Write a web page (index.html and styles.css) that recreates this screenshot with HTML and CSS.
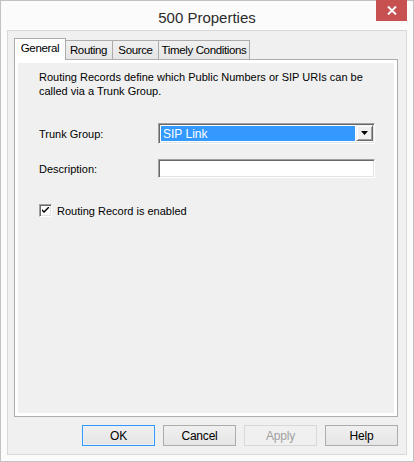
FILE: index.html
```html
<!DOCTYPE html>
<html lang="en">
<head>
<meta charset="utf-8">
<title>500 Properties</title>
<link rel="stylesheet" href="styles.css">
</head>
<body>
<div class="window">
  <div class="titlebar">
    <span></span>
    <span class="title">500 Properties</span>
    <button class="close" type="button" aria-label="Close">
      <svg width="10" height="9" viewBox="0 0 10 9"><path d="M1 0.5 L9 8.5 M9 0.5 L1 8.5" stroke="#fff" stroke-width="2" fill="none"/></svg>
    </button>
  </div>
  <div class="client">
    <div class="tabs">
      <div class="tab active">General</div>
      <div class="tab">Routing</div>
      <div class="tab">Source</div>
      <div class="tab">Timely Conditions</div>
    </div>
    <div class="panel">
      <div class="page">
        <p class="intro">Routing Records define which Public Numbers or SIP URIs can be<br>called via a Trunk Group.</p>
        <div class="field combo-row">
          <span class="label">Trunk Group:</span>
          <div class="combo">
            <span class="combo-value">SIP Link</span>
            <span class="combo-btn"><svg width="7" height="4" viewBox="0 0 7 4"><path d="M0 0 H7 L3.5 4 Z" fill="#000"/></svg></span>
          </div>
        </div>
        <div class="field edit-row">
          <span class="label">Description:</span>
          <div class="edit"></div>
        </div>
        <label class="check">
          <span class="box"><svg width="7" height="7" viewBox="0 0 7 7"><path d="M0 2 L0 4 L2 6 L7 1 L7 -1 L2 4 Z" fill="#000"/></svg></span>
          <span>Routing Record is enabled</span>
        </label>
      </div>
    </div>
    <div class="buttons">
      <button class="btn default" type="button">OK</button>
      <button class="btn" type="button">Cancel</button>
      <button class="btn" type="button" disabled>Apply</button>
      <button class="btn" type="button">Help</button>
    </div>
  </div>
</div>
</body>
</html>
```

FILE: styles.css
```css
html, body {
  margin: 0;
  padding: 0;
  background: #fff;
}

.window {
  box-sizing: border-box;
  width: 414px;
  height: 462px;
  border: 1px solid #c2c2c2;
  background: #fbfbfb;
  display: flex;
  flex-direction: column;
  font-family: "Liberation Sans", Arial, sans-serif;
  color: #000;
}

/* caption */
.titlebar {
  height: 29px;
  display: grid;
  grid-template-columns: 1fr auto 1fr;
  align-items: start;
}
.title {
  font-size: 15px;
  line-height: 15px;
  padding-top: 9px;
  color: #2b2b2b;
}
.close {
  justify-self: end;
  margin: -1px 6px 0 0;
  width: 31px;
  height: 21px;
  padding: 0;
  border: 0;
  background: #c75050;
  display: flex;
  align-items: center;
  justify-content: center;
}
.close svg { display: block; }

/* dialog area */
.client {
  flex: 1;
  margin: 0 6px 6px 6px;
  border: 1px solid #d9d9d9;
  background: #f0f0f0;
  padding: 7px 8px 8px 6px;
  display: flex;
  flex-direction: column;
}

.tabs {
  display: flex;
  align-items: flex-end;
  height: 21px;
  position: relative;
  z-index: 1;
}
.tab {
  box-sizing: border-box;
  height: 19px;
  border: 1px solid #acacac;
  border-bottom: 0;
  border-left: 0;
  background: linear-gradient(#f0f0f0, #e5e5e5);
  font-size: 11.5px;
  letter-spacing: -0.35px;
  line-height: 18px;
  padding: 0;
  text-align: center;
  white-space: nowrap;
  color: #000;
}
.tab:nth-child(2) { width: 48px; }
.tab:nth-child(3) { width: 46px; }
.tab:nth-child(4) { width: 91px; }
.tab.active {
  width: 52px;
  height: 22px;
  margin-bottom: -1px;
  border-left: 1px solid #acacac;
  border-right: 1px solid #acacac;
  margin-right: -1px;
  background: #fff;
  line-height: 19px;
  position: relative;
  z-index: 2;
}

.panel {
  height: 358px;
  box-sizing: border-box;
  border: 1px solid #adadad;
  background: #fff;
  padding: 3px;
}
.page {
  height: 100%;
  background: #f0f0f0;
  padding: 7px 0 0 21px;
  box-sizing: border-box;
  font-size: 11px;
}

.intro {
  margin: 0;
  line-height: 14px;
}

.field {
  display: flex;
  align-items: center;
}
.label {
  width: 119px;
  flex: none;
}
.combo-row { margin-top: 25px; height: 21px; }
.edit-row { margin-top: 15px; height: 19px; }

.combo {
  box-sizing: border-box;
  width: 217px;
  height: 21px;
  border: 1px solid;
  border-color: #a0a0a0 #fff #fff #a0a0a0;
  box-shadow: inset 1px 1px 0 #696969, inset -1px -1px 0 #e3e3e3;
  background: #fff;
  padding: 2px;
  display: flex;
}
.combo-value {
  flex: 1;
  background: #3399ff;
  color: #fff;
  font-size: 12px;
  line-height: 16px;
  padding-left: 2px;
}
.combo-btn {
  box-sizing: border-box;
  width: 17px;
  height: 16px;
  margin: -1px -1px 0 1px;
  background: #f0f0f0;
  border: 1px solid;
  border-color: #f0f0f0 #696969 #696969 #f0f0f0;
  box-shadow: inset 1px 1px 0 #fff, inset -1px -1px 0 #a0a0a0;
  display: flex;
  align-items: center;
  justify-content: center;
}
.combo-btn svg { display: block; }

.edit {
  box-sizing: border-box;
  width: 217px;
  height: 19px;
  border: 1px solid;
  border-color: #a0a0a0 #fff #fff #a0a0a0;
  box-shadow: inset 1px 1px 0 #696969, inset -1px -1px 0 #e3e3e3;
  background: #fff;
}

.check {
  margin-top: 26px;
  display: flex;
  align-items: center;
  gap: 5px;
}
.box {
  box-sizing: border-box;
  width: 13px;
  height: 13px;
  border: 1px solid;
  border-color: #a0a0a0 #fff #fff #a0a0a0;
  box-shadow: inset 1px 1px 0 #696969, inset -1px -1px 0 #e3e3e3;
  background: #fff;
  display: flex;
  align-items: center;
  justify-content: center;
}
.box svg { display: block; }

.buttons {
  margin-top: 8px;
  display: flex;
  justify-content: flex-end;
  gap: 8px;
}
.btn {
  box-sizing: border-box;
  width: 73px;
  height: 21px;
  border: 1px solid #acacac;
  background: linear-gradient(#f0f0f0, #e5e5e5);
  font-family: "Liberation Sans", Arial, sans-serif;
  font-size: 12px;
  letter-spacing: -0.2px;
  color: #000;
  padding: 0;
}
.btn.default {
  border-color: #3399ff;
  box-shadow: inset 0 0 0 1px #e5f1fb;
}
.btn:disabled {
  border-color: #d9d9d9;
  background: #f0f0f0;
  color: #a0a0a0;
}
```
